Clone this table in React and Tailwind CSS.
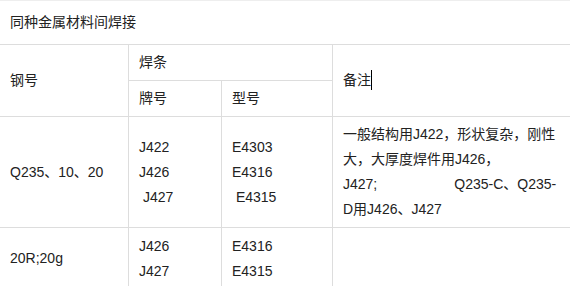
export default function App() {
  const font = { fontFamily: '"Liberation Sans", "Noto Sans CJK SC", sans-serif' };
  const cell = 'border-r border-b border-[#dddddd] px-[10px] align-middle';

  return (
    <div className="w-[570px] h-[286px] overflow-hidden bg-white text-[14px] leading-[25px] text-[#222]" style={font}>
      <div className="border-t border-[#eeeeee] h-[44px] flex items-center px-[10px]">同种金属材料间焊接</div>
      <table className="table-fixed w-[570px] border-separate border-spacing-0">
        <colgroup>
          <col className="w-[129px]" />
          <col className="w-[93px]" />
          <col className="w-[111px]" />
          <col />
        </colgroup>
        <tbody>
          <tr className="h-[37px]">
            <td rowSpan={2} className={`${cell} border-t`}>钢号</td>
            <td colSpan={2} className={`${cell} border-t`}>焊条</td>
            <td rowSpan={2} className={`${cell} border-t border-r-0`}>
              备注<span className="inline-block align-middle w-px h-[20px] bg-black -mt-[2px]" />
            </td>
          </tr>
          <tr className="h-[36px]">
            <td className={cell}>牌号</td>
            <td className={cell}>型号</td>
          </tr>
          <tr className="h-[111px]">
            <td className={cell}>Q235、10、20</td>
            <td className={cell}>
              <div>J422</div>
              <div>J426</div>
              <div>&nbsp;J427</div>
            </td>
            <td className={cell}>
              <div>E4303</div>
              <div>E4316</div>
              <div>&nbsp;E4315</div>
            </td>
            <td className={`${cell} border-r-0 whitespace-nowrap`}>
              <div>一般结构用J422，形状复杂，刚性</div>
              <div>大，大厚度焊件用J426，</div>
              <div>J427;<span className="inline-block w-[77px]" />Q235-C、Q235-</div>
              <div>D用J426、J427</div>
            </td>
          </tr>
          <tr className="h-[62px]">
            <td className={cell}>20R;20g</td>
            <td className={cell}>
              <div>J426</div>
              <div>J427</div>
            </td>
            <td className={cell}>
              <div>E4316</div>
              <div>E4315</div>
            </td>
            <td className={`${cell} border-r-0`}></td>
          </tr>
        </tbody>
      </table>
    </div>
  );
}
